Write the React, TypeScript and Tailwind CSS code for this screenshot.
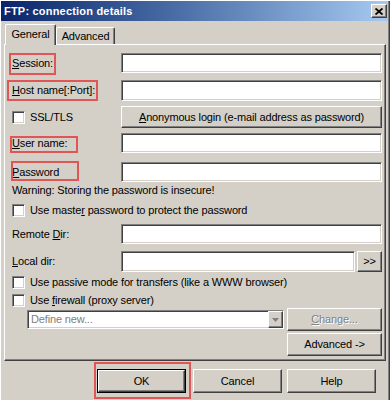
import type { ReactNode } from 'react'

const raised =
  'border border-t-white border-l-white border-r-[#404040] border-b-[#404040] shadow-[inset_-1px_-1px_#808080] bg-[#d4d0c8]'
const sunken =
  'border border-t-[#808080] border-l-[#808080] border-r-white border-b-white shadow-[inset_1px_1px_#404040,inset_-1px_-1px_#d4d0c8] bg-white'

function Check({ children, className = '' }: { children: ReactNode; className?: string }) {
  return (
    <div className={`flex items-center h-[13px] ${className}`}>
      <span className={`${sunken} w-[13px] h-[13px] shrink-0`} />
      <span className="ml-[5px] leading-[13px] whitespace-nowrap">{children}</span>
    </div>
  )
}

// red annotation box drawn over a label
function Mark({ box }: { box: string }) {
  return <span className={`absolute border-2 border-[#e05555] pointer-events-none ${box}`} />
}

function Row({ label, mark, className, children }: { label: ReactNode; mark?: string; className: string; children: ReactNode }) {
  return (
    <div className={`flex ${className}`}>
      <div className="relative w-[109px] shrink-0 flex items-center whitespace-nowrap">
        {label}
        {mark && <Mark box={mark} />}
      </div>
      <div className="flex-1 flex">{children}</div>
    </div>
  )
}

function Input({ className = '' }: { className?: string }) {
  return <div className={`${sunken} flex-1 h-full ${className}`} />
}

export default function App() {
  return (
    <div
      className="w-[390px] h-[400px] bg-[#d4d0c8] overflow-hidden text-[11px] tracking-[-0.15px] text-black shadow-[inset_1px_1px_white,inset_-1px_0_#404040,inset_-2px_0_#808080]"
      style={{ fontFamily: '"Liberation Sans", Arial, sans-serif' }}
    >
      {/* title bar */}
      <div className="ml-[1px] mt-[1px] w-[387px] h-[20px] flex items-center justify-between bg-gradient-to-r from-[#0a246a] to-[#a6caf0]">
        <span className="pl-[3px] font-bold text-white leading-none tracking-[0.2px]">FTP: connection details</span>
        <div className={`${raised} w-[16px] h-[14px] mr-[1px] flex items-center justify-center`}>
          <svg width="8" height="7" viewBox="0 0 8 7">
            <path d="M0.5 0.5 L7.5 6.5 M7.5 0.5 L0.5 6.5" stroke="black" strokeWidth="1.8" />
          </svg>
        </div>
      </div>

      {/* tabs */}
      <div className="ml-[5px] pt-[3px] flex items-end">
        <div className="relative z-10 -mb-[1px] w-[51px] h-[21px] bg-[#d4d0c8] border-l border-t border-r border-l-white border-t-white border-r-[#404040] rounded-t-[2px] shadow-[inset_-1px_0_#808080] flex items-center justify-center pb-[1px]">
          General
        </div>
        <div className="w-[59px] h-[17px] border-l border-t border-r border-l-white border-t-white border-r-[#404040] rounded-t-[2px] shadow-[inset_-1px_0_#808080] flex items-center justify-center">
          Advanced
        </div>
      </div>

      {/* tab page */}
      <div className="ml-[4px] w-[382px] h-[317px] border border-t-white border-l-white border-r-[#404040] border-b-[#404040] shadow-[inset_-1px_-1px_#808080] pl-[7px] pr-[3px] pt-[8px] flex flex-col">
        <Row className="h-[20px]" label={<span><u>S</u>ession:</span>} mark="-left-[3px] top-0 w-[47px] h-[22px]">
          <Input />
        </Row>
        <Row className="mt-[7px] h-[21px]" label={<span><u>H</u>ost name[:Port]:</span>} mark="-left-[5px] top-0 w-[91px] h-[21px]">
          <Input />
        </Row>
        <Row className="mt-[5px] h-[22px]" label={<Check>SSL/TLS</Check>}>
          <div className={`${raised} flex-1 h-full flex items-center justify-center`}>
            <span><u>A</u>nonymous login (e-mail address as password)</span>
          </div>
        </Row>
        <Row className="mt-[5px] h-[20px]" label={<span><u>U</u>ser name:</span>} mark="-left-[2px] top-[3px] w-[68px] h-[17px]">
          <Input />
        </Row>
        <Row className="mt-[9px] h-[20px]" label={<span><u>P</u>assword</span>} mark="-left-[1px] -top-[1px] w-[68px] h-[20px]">
          <Input />
        </Row>
        <div className="mt-[1px] h-[14px] leading-[14px]">Warning: Storing the password is insecure!</div>
        <Check className="mt-[7px]">
          Use maste<u>r</u> password to protect the password
        </Check>
        <Row className="mt-[7px] h-[20px]" label={<span>Remote <u>D</u>ir:</span>}>
          <Input />
        </Row>
        <Row className="mt-[7px] h-[21px]" label={<span><u>L</u>ocal dir:</span>}>
          <Input />
          <div className={`${raised} w-[25px] ml-[2px] h-full flex items-center justify-center`}>&gt;&gt;</div>
        </Row>
        <Check className="mt-[4px]">Use passive mode for transfers (like a WWW browser)</Check>
        <Check className="mt-[5px]">
          Use <u>f</u>irewall (proxy server)
        </Check>
        <div className="mt-[1px] h-[23px] flex items-center">
          <div className={`${sunken} ml-[15px] flex-1 h-[19px] flex items-center`}>
            <span className="pl-[3px] flex-1 text-[#808080]">Define new...</span>
            <div className={`${raised} w-[15px] h-full flex items-center justify-center`}>
              <svg width="7" height="4" viewBox="0 0 7 4">
                <path d="M0 0 H7 L3.5 4 Z" fill="#808080" />
              </svg>
            </div>
          </div>
          <div className={`${raised} ml-[3px] w-[95px] h-full flex items-center justify-center text-[#808080] [text-shadow:1px_1px_0_#fff]`}>
            <span><u>C</u>hange...</span>
          </div>
        </div>
        <div className="mt-[2px] h-[23px] flex justify-end">
          <div className={`${raised} w-[95px] h-full flex items-center justify-center`}>Advanced -&gt;</div>
        </div>
      </div>

      {/* dialog buttons */}
      <div className="mt-[8px] flex h-[24px]">
        <div className="relative ml-[97px] w-[89px] h-full border border-black">
          <div className={`${raised} w-full h-full flex items-center justify-center`}>OK</div>
          <Mark box="-left-[4px] -top-[8px] w-[97px] h-[37px]" />
        </div>
        <div className={`${raised} ml-[7px] w-[89px] h-full flex items-center justify-center`}>Cancel</div>
        <div className={`${raised} ml-[5px] w-[89px] h-full flex items-center justify-center`}>Help</div>
      </div>
    </div>
  )
}
